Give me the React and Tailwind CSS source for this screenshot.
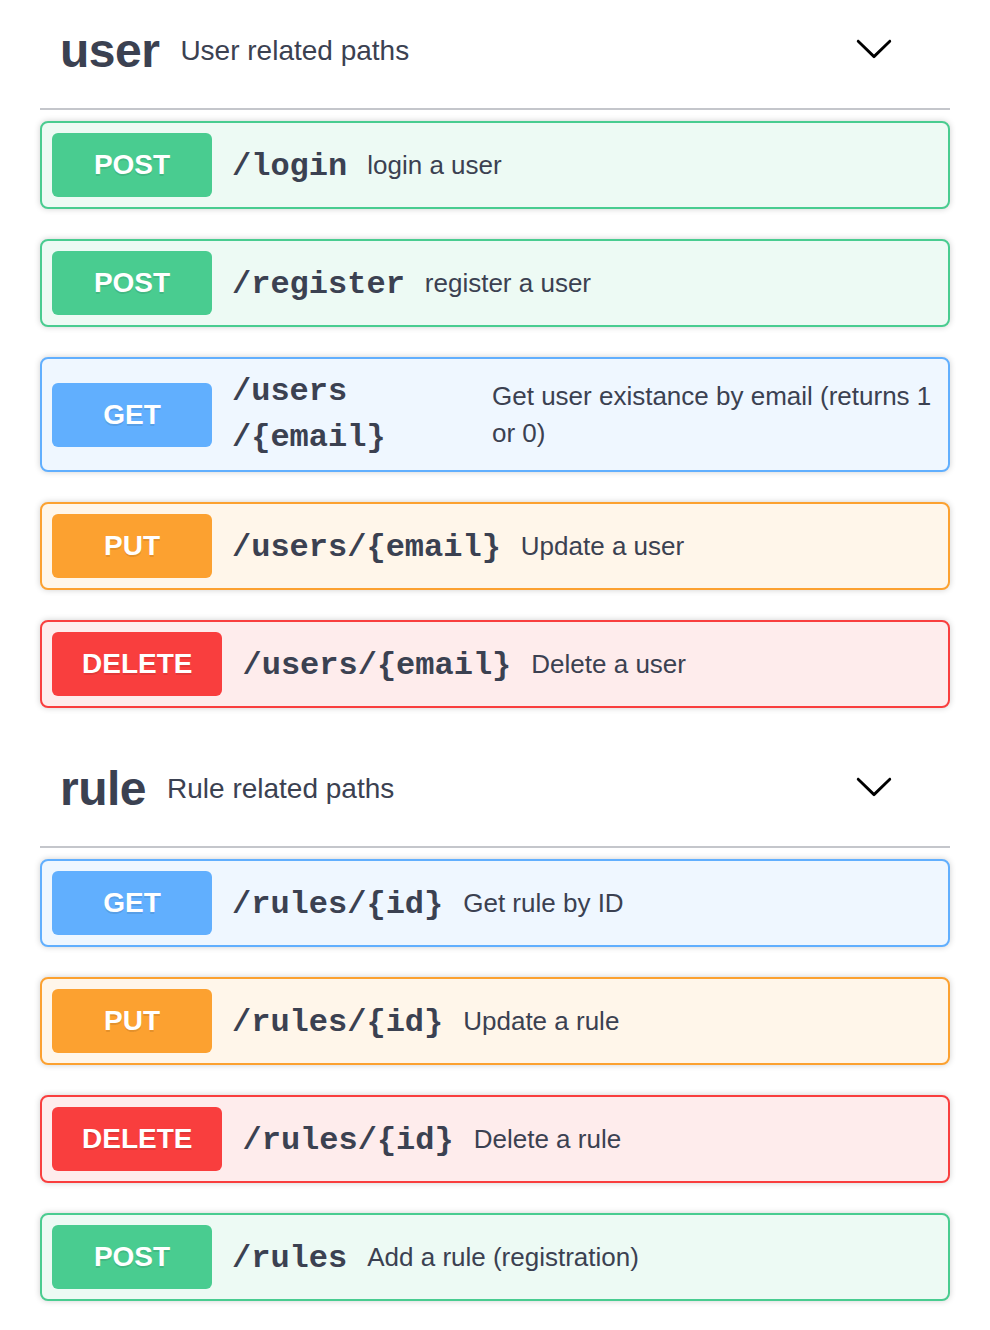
import React from "react";

const METHODS = {
  POST: { border: "border-[#49cc90]", bg: "bg-[#edfaf4]", badge: "bg-[#49cc90]" },
  GET: { border: "border-[#61affe]", bg: "bg-[#eff7ff]", badge: "bg-[#61affe]" },
  PUT: { border: "border-[#fca130]", bg: "bg-[#fff6ea]", badge: "bg-[#fca130]" },
  DELETE: { border: "border-[#f93e3e]", bg: "bg-[#feecec]", badge: "bg-[#f93e3e]" },
};

function Chevron() {
  return (
    <svg width="40" height="40" viewBox="0 0 20 20" className="shrink-0 mb-[6px]" fill="#000">
      <path d="M17.418 6.109c.272-.268.709-.268.979 0s.271.701 0 .969l-7.908 7.83c-.27.268-.707.268-.979 0l-7.908-7.83c-.27-.268-.27-.701 0-.969.271-.268.709-.268.979 0L10 13.25l7.418-7.141z" />
    </svg>
  );
}

function TagHeader({ name, desc }) {
  return (
    <div className="flex items-center h-[110px] pb-[7px] pl-[20px] pr-[56px] border-b-2 border-[#c4c6cb] mb-[11px] text-[#3b4151]">
      <span className="font-['Liberation_Sans',Arial,sans-serif] font-bold text-[48px] tracking-[-0.5px]">{name}</span>
      <span className="flex-1 pl-[21px] font-['Liberation_Sans',Arial,sans-serif] text-[28px]">{desc}</span>
      <Chevron />
    </div>
  );
}

function Op({ method, path, desc, pathWidth }) {
  const m = METHODS[method];
  return (
    <div
      className={`flex items-center p-[10px] border-2 rounded-[8px] mb-[30px] shadow-[0_0_6px_rgba(0,0,0,0.19)] ${m.border} ${m.bg}`}
    >
      <div
        className={`shrink-0 min-w-[160px] px-[30px] h-[64px] flex items-center justify-center rounded-[6px] text-white font-bold text-[28px] font-['Liberation_Sans',Arial,sans-serif] [text-shadow:0_2px_0_rgba(0,0,0,0.1)] ${m.badge}`}
      >
        {method}
      </div>
      <div
        className={`shrink-0 px-[20px] font-['Liberation_Mono','Courier_New',monospace] font-bold text-[32px] text-[#3b4151] ${pathWidth ? "w-[280px] leading-[45.5px]" : "pt-[3px]"}`}
      >
        {path}
      </div>
      <div className="flex-1 font-['Liberation_Sans',Arial,sans-serif] text-[26px] leading-[37px] text-[#3b4151]">
        {desc}
      </div>
    </div>
  );
}

export default function App() {
  return (
    <div className="bg-white min-h-[1330px] w-[990px]">
      <div className="mx-[40px] w-[910px]">
        <section>
          <TagHeader name="user" desc="User related paths" />
          <Op method="POST" path="/login" desc="login a user" />
          <Op method="POST" path="/register" desc="register a user" />
          <Op
            method="GET"
            pathWidth
            path={
              <>
                /users
                <br />
                /{"{email}"}
              </>
            }
            desc="Get user existance by email (returns 1 or 0)"
          />
          <Op method="PUT" path="/users/{email}" desc="Update a user" />
          <Op method="DELETE" path="/users/{email}" desc="Delete a user" />
        </section>
        <section>
          <TagHeader name="rule" desc="Rule related paths" />
          <Op method="GET" path="/rules/{id}" desc="Get rule by ID" />
          <Op method="PUT" path="/rules/{id}" desc="Update a rule" />
          <Op method="DELETE" path="/rules/{id}" desc="Delete a rule" />
          <Op method="POST" path="/rules" desc="Add a rule (registration)" />
        </section>
      </div>
    </div>
  );
}
